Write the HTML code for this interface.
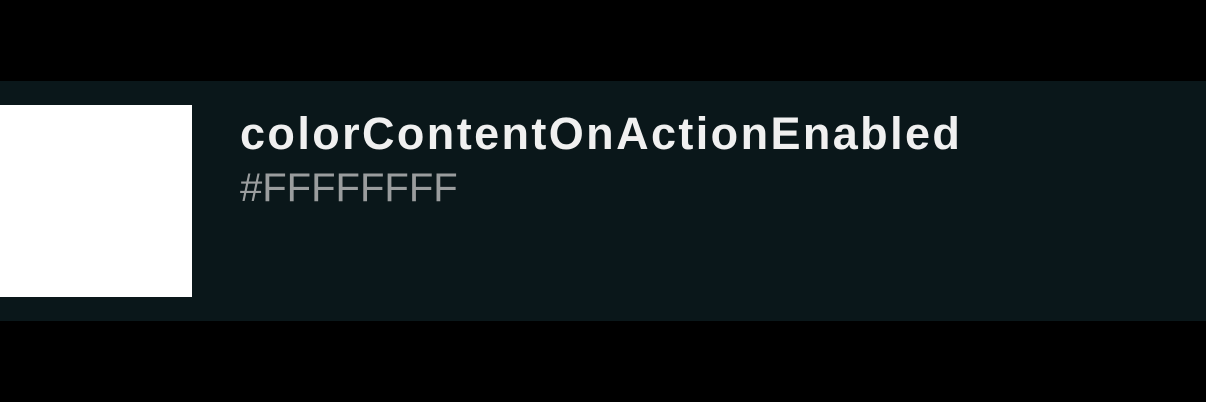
<!DOCTYPE html>
<html><head><style>
html,body{margin:0;padding:0;width:1206px;height:402px;background:#000;overflow:hidden;font-family:"Liberation Sans",sans-serif}
.band{position:absolute;left:0;top:81px;width:1206px;height:240px;background:#0a171a}
.sw{position:absolute;left:0;top:105px;width:192px;height:192px;background:#fff}
.t{position:absolute;left:240px;top:108px;font-size:45px;font-weight:bold;color:#f0f0f0;white-space:nowrap;line-height:52px;letter-spacing:2.4px}
.s{position:absolute;left:240px;top:164px;font-size:40px;color:#9a9d9e;white-space:nowrap;line-height:48px}
</style></head><body>
<div class="band"></div>
<div class="sw"></div>
<div class="t">colorContentOnActionEnabled</div>
<div class="s">#FFFFFFFF</div>
</body></html>
